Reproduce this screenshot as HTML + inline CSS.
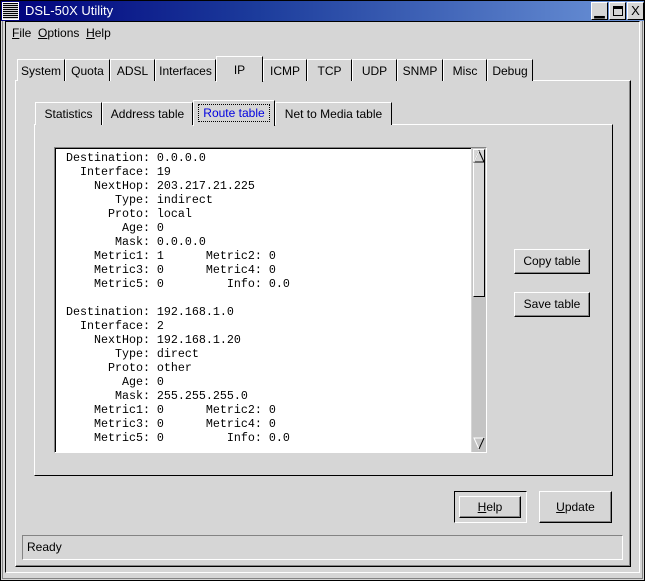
<!DOCTYPE html>
<html><head><style>
*{margin:0;padding:0;box-sizing:border-box}
body{width:645px;height:581px;background:#d6d6d6;position:relative;overflow:hidden;font-family:"Liberation Sans",sans-serif;font-size:12px;color:#000}
.a{position:absolute}
.raised{border-top:1px solid #fff;border-left:1px solid #fff;border-right:1px solid #000;border-bottom:1px solid #000}
.tab{position:absolute;top:59px;height:22px;border-top:1px solid #fff;border-left:1px solid #fff;border-right:1px solid #000;text-align:center;line-height:22px;background:#d6d6d6;white-space:nowrap}
.itab{position:absolute;top:102px;height:23px;border-top:1px solid #fff;border-left:1px solid #fff;border-right:1px solid #000;text-align:center;line-height:22px;background:#d6d6d6;white-space:nowrap}
.btn{position:absolute;background:#d6d6d6;border-top:1px solid #fff;border-left:1px solid #fff;border-right:1px solid #000;border-bottom:1px solid #000;box-shadow:inset -1px -1px 0 #848484;text-align:center}
pre{font-family:"Liberation Mono",monospace;font-size:11.67px;line-height:14px}
.tb{position:absolute;top:2px;width:17px;height:18px;background:#d6d6d6;border-top:1px solid #fff;border-left:1px solid #fff;border-right:1px solid #000;border-bottom:1px solid #000;font-size:13px;text-align:center;line-height:16px;font-weight:bold}
</style></head><body>
<div class="a" style="left:0;top:0;width:645px;height:581px;border:1px solid #000"></div>
<div class="a" style="left:2px;top:2px;width:641px;height:577px;border:1px solid #848484"></div>
<div class="a" style="left:5px;top:21px;width:635px;height:552px;border-left:1px solid #000;border-top:1px solid #000;border-right:1px solid #fff;border-bottom:1px solid #fff"></div>
<!-- title -->
<div class="a" style="left:1px;top:1px;width:643px;height:20px;background:linear-gradient(90deg,#00007c 0%,#1c3c9c 40%,#6c94d8 100%)"></div>
<div class="a" style="left:2px;top:2px;width:17px;height:18px;background:repeating-linear-gradient(#000 0 1px,#d6d6d6 1px 2px);border:1px solid #fff"></div>
<div class="a" style="left:25px;top:3px;color:#fff;font-size:13px">DSL-50X Utility</div>
<div class="tb" style="left:591px">&#x2581;</div>
<div class="tb" style="left:609px"><div style="margin:3px auto;width:10px;height:10px;border:1px solid #000;border-top-width:3px"></div></div>
<div class="tb" style="left:627px;font-weight:normal">X</div>
<!-- menu -->
<div class="a" style="left:12px;top:26px"><u>F</u>ile&nbsp; <u>O</u>ptions&nbsp; <u>H</u>elp</div>
<!-- outer panel -->
<div class="a raised" style="left:15px;top:80px;width:616px;height:487px;box-shadow:inset -1px -1px 0 #848484"></div>
<div class="tab" style="left:17px;width:48px">System</div>
<div class="tab" style="left:65px;width:45px">Quota</div>
<div class="tab" style="left:110px;width:45px">ADSL</div>
<div class="tab" style="left:155px;width:61px">Interfaces</div>
<div class="tab" style="left:216px;top:56px;height:26px;width:47px;line-height:26px">IP</div>
<div class="tab" style="left:263px;width:44px">ICMP</div>
<div class="tab" style="left:307px;width:45px">TCP</div>
<div class="tab" style="left:352px;width:45px">UDP</div>
<div class="tab" style="left:397px;width:46px">SNMP</div>
<div class="tab" style="left:443px;width:44px">Misc</div>
<div class="tab" style="left:487px;width:46px">Debug</div>
<!-- inner panel -->
<div class="a raised" style="left:34px;top:124px;width:579px;height:352px"></div>
<div class="itab" style="left:35px;width:67px">Statistics</div>
<div class="itab" style="left:102px;width:91px">Address table</div>
<div class="itab" style="left:193px;top:100px;height:26px;width:82px;color:#0000e0;line-height:24px"><span style="border:1px dotted #000;padding:1px 4px">Route table</span></div>
<div class="itab" style="left:275px;width:117px">Net to Media table</div>
<!-- text box -->
<div class="a" style="left:54px;top:147px;width:433px;height:306px;border-top:1px solid #848484;border-left:1px solid #848484;border-right:1px solid #fff;border-bottom:1px solid #fff"></div>
<div class="a" style="left:55px;top:148px;width:416px;height:304px;background:#fff;border-top:1px solid #000;border-left:1px solid #000;overflow:hidden">
<pre style="padding:2px 0 0 10px">Destination: 0.0.0.0
  Interface: 19
    NextHop: 203.217.21.225
       Type: indirect
      Proto: local
        Age: 0
       Mask: 0.0.0.0
    Metric1: 1      Metric2: 0
    Metric3: 0      Metric4: 0
    Metric5: 0         Info: 0.0

Destination: 192.168.1.0
  Interface: 2
    NextHop: 192.168.1.20
       Type: direct
      Proto: other
        Age: 0
       Mask: 255.255.255.0
    Metric1: 0      Metric2: 0
    Metric3: 0      Metric4: 0
    Metric5: 0         Info: 0.0</pre></div>
<!-- scrollbar -->
<div class="a" style="left:472px;top:148px;width:14px;height:304px;background:#c4c4c4"></div>
<div class="a" style="left:473px;top:149px;width:12px;height:148px;border-top:1px solid #fff;border-left:1px solid #fff;border-right:1px solid #000;border-bottom:1px solid #000;background:#d6d6d6"></div>
<svg class="a" style="left:473px;top:149px" width="12" height="14"><path d="M1 13 L6 2 L11 13 Z" fill="#d6d6d6" stroke="#000" stroke-width="1"/><path d="M1 13 L6 2" stroke="#fff"/></svg>
<svg class="a" style="left:473px;top:437px" width="12" height="14"><path d="M1 1 L6 12 L11 1 Z" fill="#c4c4c4" stroke="#fff" stroke-width="1"/><path d="M6 12 L11 1" stroke="#000"/></svg>
<!-- buttons -->
<div class="btn" style="left:514px;top:249px;width:76px;height:25px;line-height:23px">Copy table</div>
<div class="btn" style="left:514px;top:292px;width:76px;height:25px;line-height:23px">Save table</div>
<div class="a" style="left:454px;top:491px;width:73px;height:32px;border-top:1px solid #000;border-left:1px solid #000;border-right:1px solid #fff;border-bottom:1px solid #fff"></div>
<div class="btn" style="left:459px;top:496px;width:62px;height:22px;line-height:20px"><u>H</u>elp</div>
<div class="btn" style="left:539px;top:491px;width:73px;height:32px;line-height:30px"><u>U</u>pdate</div>
<!-- status -->
<div class="a" style="left:22px;top:535px;width:601px;height:25px;border-top:1px solid #848484;border-left:1px solid #848484;border-right:1px solid #fff;border-bottom:1px solid #fff;line-height:23px;padding-left:4px">Ready</div>
</body></html>
